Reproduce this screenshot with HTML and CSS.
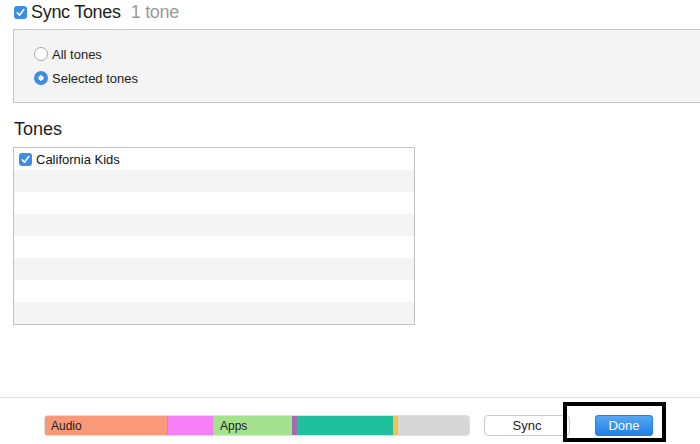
FILE: index.html
```html
<!DOCTYPE html>
<html>
	<head>
		<meta charset="UTF-8">
		<title>Tones</title>
		<link rel="stylesheet" href="styles.css">
	</head>
	<body>
		<div id="page">
			<div class="sync-head">
				<span class="check on"><svg viewBox="0 0 13 13" width="13" height="13"><path d="M3.2 6.8 L5.5 9.2 L9.8 3.6" fill="none" stroke="#fff" stroke-width="1.6" stroke-linecap="round" stroke-linejoin="round"/></svg></span>
				<span class="title">Sync Tones</span>
				<span class="count">1 tone</span>
			</div>

			<div class="group">
				<label class="radio"><span class="dot"></span>All tones</label>
				<label class="radio"><span class="dot on"></span>Selected tones</label>
			</div>

			<h2 class="list-title">Tones</h2>
			<ul class="tones">
				<li><span class="check on"><svg viewBox="0 0 13 13" width="13" height="13"><path d="M3.2 6.8 L5.5 9.2 L9.8 3.6" fill="none" stroke="#fff" stroke-width="1.6" stroke-linecap="round" stroke-linejoin="round"/></svg></span>California Kids</li>
				<li></li>
				<li></li>
				<li></li>
				<li></li>
				<li></li>
				<li></li>
				<li></li>
			</ul>
		</div>

		<div id="footer">
			<div class="capacity">
				<div class="seg audio" style="width:123px">Audio</div>
				<div class="seg photos" style="width:45px"></div>
				<div class="seg apps" style="width:79px">Apps</div>
				<div class="seg books" style="width:5px"></div>
				<div class="seg docs" style="width:96px"></div>
				<div class="seg other" style="width:5px"></div>
				<div class="seg free"></div>
			</div>
			<button class="btn sync">Sync</button>
			<div class="done-wrap">
				<button class="btn done">Done</button>
				<div class="mark"></div>
			</div>
		</div>
	</body>
</html>
```

FILE: styles.css
```css
*{
	margin:0;
	padding:0;
	box-sizing:border-box;
}
html,body{
	width:700px;
	height:444px;
	overflow:hidden;
	background:#fff;
	font-family:"Liberation Sans", Arial, sans-serif;
	color:#222;
}
#page{
	height:397px;
	overflow:hidden;
}
ul{
	list-style:none;
}
.check{
	display:inline-flex;
	width:13px;
	height:13px;
	border-radius:3px;
	background:#3b8de6;
	flex:none;
}
.sync-head{
	display:flex;
	align-items:center;
	height:24px;
	padding-left:14px;
	margin-bottom:5px;
}
.sync-head .title{
	font-size:18px;
	margin-left:4px;
	letter-spacing:-0.3px;
	color:#1e1e1e;
}
.sync-head .count{
	font-size:18px;
	margin-left:10px;
	color:#9a9a9a;
	letter-spacing:-0.3px;
}
.group{
	margin-left:13px;
	width:700px;
	height:74px;
	background:#f4f4f4;
	border:1px solid #c6c6c6;
	border-right:none;
	padding:12px 0 0 20px;
}
.radio{
	display:flex;
	align-items:center;
	height:24px;
	font-size:13px;
	color:#222;
}
.radio .dot{
	width:14px;
	height:14px;
	border-radius:50%;
	border:1px solid #a8a8a8;
	background:#fff;
	margin-right:4px;
}
.radio .dot.on{
	border:none;
	background:radial-gradient(circle, #fff 0 2.4px, #3b8de6 2.9px);
}
.list-title{
	font-size:18px;
	font-weight:normal;
	color:#1e1e1e;
	margin:15px 0 0 14px;
	height:29px;
	line-height:22px;
}
.tones{
	margin-left:13px;
	width:402px;
	border:1px solid #c2c2c2;
}
.tones li{
	height:22px;
	display:flex;
	align-items:center;
	padding-left:5px;
	font-size:13px;
	color:#111;
}
.tones li:nth-child(even){
	background:#f4f4f4;
}
.tones li .check{
	margin-right:4px;
}
#footer{
	height:47px;
	border-top:1px solid #dedede;
	display:flex;
	align-items:flex-start;
	padding:17px 0 0 44px;
}
.capacity{
	display:flex;
	width:426px;
	height:21px;
	border-radius:3px;
	overflow:hidden;
	border:1px solid rgba(0,0,0,0.12);
}
.seg{
	height:100%;
	font-size:12px;
	line-height:20px;
	padding-left:6px;
	color:#222;
	flex:none;
}
.audio{ background:#f9997a; border-right:1px solid #e08870; }
.photos{ background:#f57ff4; }
.apps{ background:#a5e28f; border-left:1px solid #c6c0c0; }
.books{ background:#a06cae; padding:0; }
.docs{ background:#20c09f; }
.other{ background:#f0c153; padding:0; }
.free{ background:#d7d7d7; flex:1; }
.btn{
	font-family:"Liberation Sans", Arial, sans-serif;
	font-size:13px;
	height:21px;
	border-radius:4px;
	cursor:pointer;
}
.sync{
	margin-left:14px;
	width:86px;
	background:#fff;
	border:1px solid #c8c8c8;
	color:#222;
}
.done-wrap{
	position:relative;
	margin-left:25px;
}
.done{
	width:58px;
	border:none;
	color:#fff;
	background:linear-gradient(#5aa9f4, #1e7fe6);
	box-shadow:0 0 0 1px #2a7fd8 inset;
}
.mark{
	position:absolute;
	left:-32px;
	top:-13px;
	width:103px;
	height:40px;
	border:4px solid #000;
}
```
